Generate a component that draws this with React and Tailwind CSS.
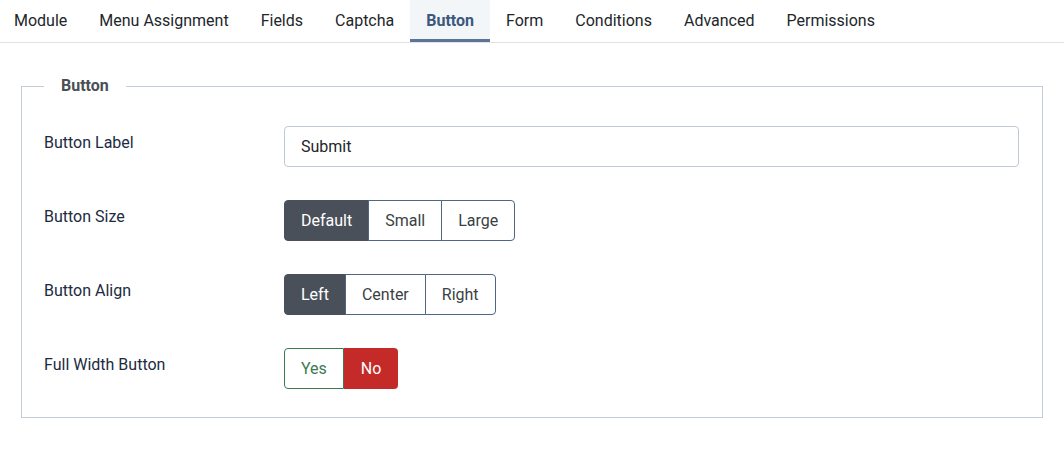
import React from "react";

const tabs = ["Module", "Menu Assignment", "Fields", "Captcha", "Button", "Form", "Conditions", "Advanced", "Permissions"];

function Group({ options, active }) {
  return (
    <div className="flex h-[41px]">
      {options.map((o, i) => {
        const isActive = o === active;
        const first = i === 0;
        const last = i === options.length - 1;
        return (
          <div
            key={o}
            className={
              "flex items-center px-[16px] text-[16px] border border-[#4f6784] " +
              (first ? "rounded-l-[4px] " : "-ml-px ") +
              (last ? "rounded-r-[4px] " : "") +
              (isActive ? "bg-[#495059] text-white border-[#495059]" : "bg-white text-[#3a3f45]")
            }
          >
            {o}
          </div>
        );
      })}
    </div>
  );
}

function Row({ label, children }) {
  return (
    <div className="flex">
      <div className="w-[240px] shrink-0 pt-[5px] text-[16px] text-[#1c2b41]">{label}</div>
      <div className="flex-1">{children}</div>
    </div>
  );
}

export default function App() {
  return (
    <div className="w-[1064px] h-[464px] bg-white" style={{ fontFamily: "Roboto, 'Liberation Sans', sans-serif" }}>
      <div className="flex h-[43px] border-b border-[#dfe3e7]">
        <div className="flex -ml-[2px]">
          {tabs.map((t) => (
            <div
              key={t}
              className={
                "flex items-center px-[16px] text-[16px] " +
                (t === "Button"
                  ? "bg-[#f3f6f9] text-[#3d587c] font-bold border-b-[3px] border-[#5b7598] pt-[3px]"
                  : "text-[#22262a]")
              }
            >
              {t}
            </div>
          ))}
        </div>
      </div>
      <div className="px-[21px] pt-[31px]">
        <fieldset className="border border-[#c3cdd8] pl-[22px] pr-[23px] pb-[28px] pt-[28px]">
          <legend className="px-[17px] text-[16px] font-bold text-[#4a4f55]">Button</legend>
          <div className="flex flex-col gap-[33px]">
            <Row label="Button Label">
              <div className="h-[41px] flex items-center border border-[#bfcad6] rounded-[4px] px-[16px] text-[16px] text-[#22262a]">
                Submit
              </div>
            </Row>
            <Row label="Button Size">
              <Group options={["Default", "Small", "Large"]} active="Default" />
            </Row>
            <Row label="Button Align">
              <Group options={["Left", "Center", "Right"]} active="Left" />
            </Row>
            <Row label="Full Width Button">
              <div className="flex h-[41px]">
                <div className="flex items-center px-[16px] text-[16px] border border-[#3b7a4f] rounded-l-[4px] text-[#3b7a4f] bg-white">
                  Yes
                </div>
                <div className="flex items-center px-[17px] text-[16px] rounded-r-[4px] bg-[#c42a28] text-white">No</div>
              </div>
            </Row>
          </div>
        </fieldset>
      </div>
    </div>
  );
}
